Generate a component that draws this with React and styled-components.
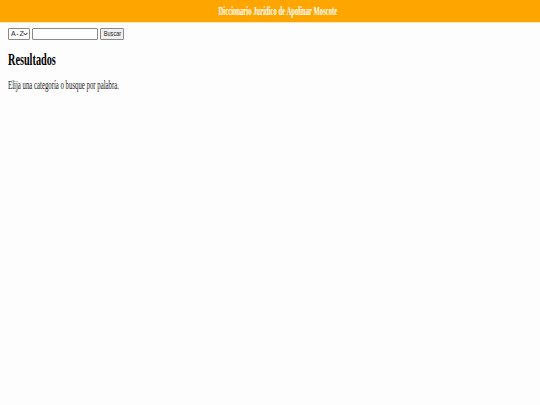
import React from "react";
import styled, { createGlobalStyle } from "styled-components";

const GlobalStyle = createGlobalStyle`
  html, body {
    margin: 0;
    background: #fdfdfd;
  }
  body {
    font-family: "Liberation Serif", "Times New Roman", serif;
    color: #111;
  }
`;

const Header = styled.header`
  height: 22px;
  background-color: #ffa500;
  border-bottom: 1px solid #ffe7b0;
  padding-left: 16px;

  display: flex;
  justify-content: center;
  align-items: center;
`;

// the whole reference is drawn narrow, so text is squeezed sideways
const Squeeze = styled.span`
  display: inline-block;
  white-space: nowrap;
  transform: scaleX(${props => props.x || 0.58});
  transform-origin: ${props => (props.center ? "center" : "left")} center;
`;

const Title = styled.div`
  color: #fff;
  font-weight: bold;
  font-size: 12px;
  text-align: center;
`;

const Main = styled.main`
  padding: 4px 8px;
`;

const SearchRow = styled.div`
  display: flex;
  align-items: center;
  gap: 2px;
  height: 13px;
`;

const Select = styled.select`
  appearance: none;
  box-sizing: border-box;
  width: 22px;
  height: 12px;
  padding: 0 0 0 2px;
  border: 1px solid #8a8a8a;
  border-radius: 1px;
  background: #fff;
  font-family: "Liberation Sans", Arial, sans-serif;
  font-size: 7px;
  letter-spacing: -0.5px;
  color: #222;
  outline: none;
`;

const SelectWrap = styled.div`
  position: relative;
  display: flex;

  svg {
    position: absolute;
    right: 2px;
    top: 4px;
    pointer-events: none;
  }
`;

const Input = styled.input`
  box-sizing: border-box;
  width: 66px;
  height: 12px;
  padding: 0 2px;
  border: 1px solid #8a8a8a;
  border-radius: 1px;
  background: #fff;
  font-size: 7px;
  outline: none;
`;

const Button = styled.button`
  box-sizing: border-box;
  width: 24px;
  height: 12px;
  padding: 0;
  border: 1px solid #8a8a8a;
  border-radius: 1px;
  background: #efefef;
  font-family: "Liberation Sans", Arial, sans-serif;
  font-size: 8px;
  color: #222;
  overflow: hidden;

  display: flex;
  justify-content: center;
  align-items: center;
`;

const Heading = styled.h2`
  margin: 10px 0 0;
  font-size: 16px;
  line-height: 20px;
  font-weight: bold;
  color: #000;
`;

const Note = styled.p`
  margin: 8px 0 0;
  font-size: 12px;
  line-height: 14px;
  color: #1a1a1a;
`;

export default function App() {
  return (
    <>
      <GlobalStyle />
      <Header>
        <Title>
          <Squeeze center x={0.555}>
            Diccionario Jurídico de Apolinar Moscote
          </Squeeze>
        </Title>
      </Header>
      <Main>
        <SearchRow>
          <SelectWrap>
            <Select defaultValue="az">
              <option value="az">A - Z</option>
            </Select>
            <svg width="5" height="4" viewBox="0 0 5 4">
              <path d="M0.5 0.8 L2.5 3 L4.5 0.8" fill="none" stroke="#222" strokeWidth="1" />
            </svg>
          </SelectWrap>
          <Input type="text" />
          <Button>
            <Squeeze center x={0.7}>Buscar</Squeeze>
          </Button>
        </SearchRow>
        <Heading>
          <Squeeze x={0.64}>Resultados</Squeeze>
        </Heading>
        <Note>
          <Squeeze x={0.565}>Elija una categoría o busque por palabra.</Squeeze>
        </Note>
      </Main>
    </>
  );
}
